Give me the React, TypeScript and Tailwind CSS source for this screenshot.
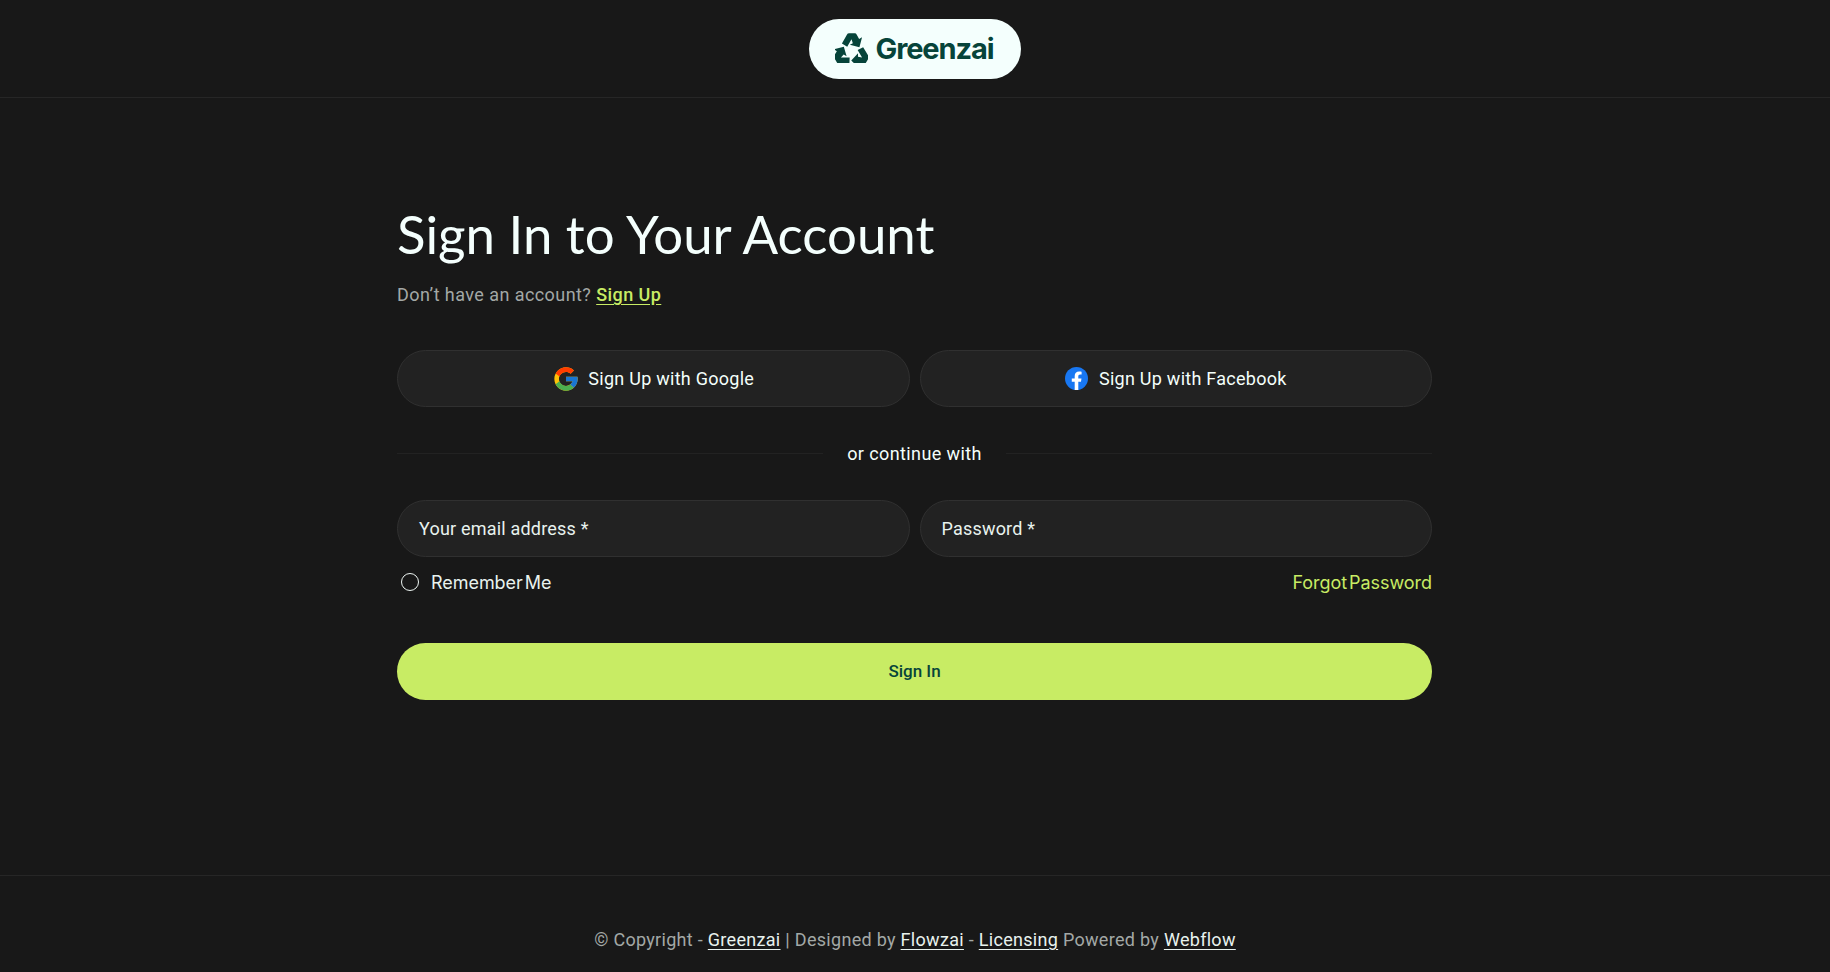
import { FcGoogle } from "react-icons/fc";

const bodyFont = "font-['Roboto',sans-serif]";

function RecycleLogo() {
  const arrow =
    "M21 34 36 7Q38 3 43 3H60Q64 3 66 7L73 20 82 15 74 45 45 38 54 33 50 21 37 44Z";
  return (
    <svg className="mb-[3px]" width="33" height="31" viewBox="0 0 100 92" fill="currentColor" aria-hidden="true">
      <path d={arrow} />
      <path d={arrow} transform="rotate(120 50 58)" />
      <path d={arrow} transform="rotate(240 50 58)" />
    </svg>
  );
}

function FacebookIcon() {
  return (
    <svg width="23" height="23" viewBox="0 0 24 24" aria-hidden="true">
      <circle cx="12" cy="12" r="12" fill="#1877f2" />
      <path
        d="M16.67 15.47 17.2 12h-3.33V9.75c0-.95.47-1.87 1.95-1.87h1.51V4.93s-1.37-.23-2.68-.23c-2.74 0-4.53 1.66-4.53 4.67V12H7.08v3.47h3.04V24a12 12 0 0 0 3.75 0v-8.53h2.8Z"
        fill="#fff"
      />
    </svg>
  );
}

function SocialButton({ icon, gap, label }: { icon: React.ReactNode; gap: string; label: string }) {
  return (
    <button className={`flex h-[57px] items-center justify-center rounded-full border border-[#303030] bg-[#222222] text-[18px] tracking-[0.26px] text-[#f4fffb] ${gap}`}>
      {icon}
      {label}
    </button>
  );
}

function Field({ placeholder }: { placeholder: string }) {
  return (
    <div className="flex h-[57px] items-center rounded-full border border-[#303030] bg-[#222222] px-[21px] pb-[1px] text-[18px] tracking-[0.2px] text-[#e8f2ee]">
      {placeholder}
    </div>
  );
}

export default function App() {
  return (
    <div className={`flex h-[972px] flex-col overflow-hidden bg-[#181818] ${bodyFont}`}>
      <header className="flex h-[98px] items-start justify-center border-b border-[#262626] pt-[19px]">
        <div className="flex h-[60px] w-[212px] items-center justify-center gap-[8px] rounded-full bg-[#f4fffd] pr-[2px] font-['Inter',sans-serif] text-[29px] font-bold tracking-[-1.1px] text-[#06443a]">
          <RecycleLogo />
          Greenzai
        </div>
      </header>

      <main className="flex flex-1 flex-col pr-[398px] pl-[397px] pt-[102px]">
        <h1 className="font-['Lato',sans-serif] text-[52.8px] leading-[68px] font-normal text-[#f4fffd]">
          Sign In to Your Account
        </h1>
        <p className="mt-[13px] text-[18px] leading-[28px] tracking-[0.43px] text-[#a3a8a6]">
          Don’t have an account?{" "}
          <a className="font-medium text-[#c8ec64] underline underline-offset-[3px]">Sign Up</a>
        </p>

        <div className="mt-[41px] grid grid-cols-2 gap-[10px]">
          <SocialButton gap="gap-[8px]" icon={<FcGoogle className="h-[28px] w-[28px]" />} label="Sign Up with Google" />
          <SocialButton gap="gap-[11px]" icon={<FacebookIcon />} label="Sign Up with Facebook" />
        </div>

        <div className="mt-[35px] flex h-[22px] items-center gap-[24px]">
          <div className="h-px flex-1 bg-[#222222]" />
          <span className="text-[18px] tracking-[0.4px] text-[#f4fffb]">or continue with</span>
          <div className="h-px flex-1 bg-[#222222]" />
        </div>

        <div className="mt-[36px] grid grid-cols-2 gap-[10px]">
          <Field placeholder="Your email address *" />
          <Field placeholder="Password *" />
        </div>

        <div className="mt-[11px] flex h-[28px] items-center justify-between font-['Inter',sans-serif] text-[18px] tracking-[-0.05px] [word-spacing:-3px]">
          <label className="flex items-center gap-[12px] pl-[4px] text-[#e8f2ee]">
            <span className="h-[18px] w-[18px] rounded-full border-[1.5px] border-[#eef6f3]" />
            Remember Me
          </label>
          <a className="text-[#c8ec64]">Forgot Password</a>
        </div>

        <button className="mt-[47px] h-[57px] rounded-full bg-[#c8ec64] text-[17px] font-medium text-[#06443a]">
          Sign In
        </button>
      </main>

      <footer className="flex h-[97px] items-start justify-center border-t border-[#262626] pt-[52px] text-[18px] leading-[24px] tracking-[0.3px] text-[#a3a8a6]">
        <p>
          © Copyright - <a className="text-[#e8f2ee] underline underline-offset-[3px]">Greenzai</a> | Designed by{" "}
          <a className="text-[#e8f2ee] underline underline-offset-[3px]">Flowzai</a> -{" "}
          <a className="text-[#e8f2ee] underline underline-offset-[3px]">Licensing</a> Powered by{" "}
          <a className="text-[#e8f2ee] underline underline-offset-[3px]">Webflow</a>
        </p>
      </footer>
    </div>
  );
}
